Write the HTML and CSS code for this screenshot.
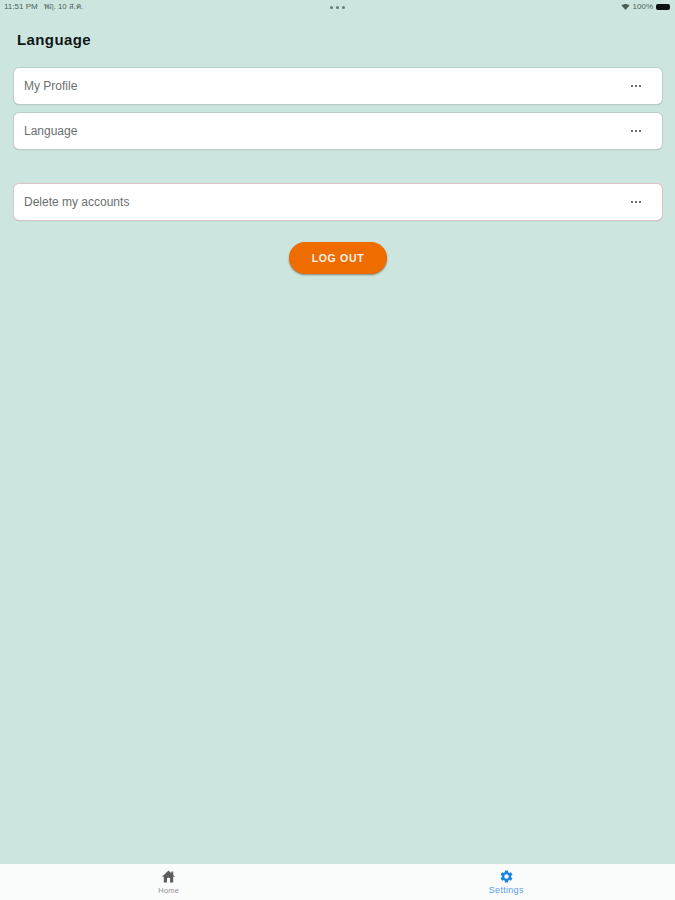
FILE: index.html
```html
<!DOCTYPE html>
<html lang="en">

<head>
    <meta charset="UTF-8">
    <meta name="viewport" content="width=device-width, initial-scale=1.0">
    <title>Settings</title>
    <link rel="stylesheet" href="styles.css">
</head>

<body>
    <header class="status-bar">
        <div class="status-left">
            <span class="time">11:51 PM</span>
            <span class="date">พฤ. 10 ส.ค.</span>
        </div>
        <div class="multitask"><i></i><i></i><i></i></div>
        <div class="status-right">
            <svg class="wifi" viewBox="0 0 24 18">
                <path d="M12 18 0 4.500C7-1.500 17-1.500 24 4.500z" />
            </svg>
            <span class="percent">100%</span>
            <span class="battery"></span>
        </div>
    </header>

    <main class="content">
        <h1>Language</h1>

        <button class="row">
            <span class="label">My Profile</span>
            <span class="dots"><i></i><i></i><i></i></span>
        </button>
        <button class="row">
            <span class="label">Language</span>
            <span class="dots"><i></i><i></i><i></i></span>
        </button>
        <button class="row row-delete">
            <span class="label">Delete my accounts</span>
            <span class="dots"><i></i><i></i><i></i></span>
        </button>

        <button class="logout"><span>LOG OUT</span></button>
    </main>

    <nav class="tab-bar">
        <a class="tab">
            <svg viewBox="0 0 24 24">
                <path d="M12 2.500 1.500 12.500H4.500V21.500H9.500V16a2.500 2.500 0 0 1 5 0V21.500H19.500V12.500H22.500L19.500 9.700V4H16.500V6.800z" />
            </svg>
            <span>Home</span>
        </a>
        <a class="tab active">
            <svg viewBox="0 0 24 24">
                <path d="M19.140 12.940c.04-.3.06-.61.06-.94 0-.32-.02-.64-.07-.94l2.030-1.580a.49.49 0 0 0 .12-.61l-1.920-3.320a.488.488 0 0 0-.59-.22l-2.390.96c-.5-.38-1.030-.7-1.620-.94l-.36-2.540a.484.484 0 0 0-.48-.41h-3.840c-.24 0-.43.17-.47.41l-.36 2.540c-.59.24-1.130.57-1.620.94l-2.390-.96c-.22-.08-.47 0-.59.22L2.740 8.870c-.12.21-.08.47.12.61l2.030 1.580c-.05.3-.09.63-.09.94s.02.64.07.94l-2.030 1.580a.49.49 0 0 0-.12.61l1.920 3.320c.12.22.37.29.59.22l2.390-.96c.5.38 1.030.7 1.620.94l.36 2.540c.05.24.24.41.48.41h3.840c.24 0 .44-.17.47-.41l.36-2.540c.59-.24 1.130-.56 1.620-.94l2.390.96c.22.08.47 0 .59-.22l1.920-3.320c.12-.22.07-.47-.12-.61zM12 15.600A3.600 3.600 0 1 1 12 8.400a3.600 3.600 0 0 1 0 7.200z" />
            </svg>
            <span>Settings</span>
        </a>
    </nav>
</body>

</html>
```

FILE: styles.css
```css
* {
    box-sizing: border-box;
    margin: 0;
    padding: 0;
}

body {
    font-family: "Liberation Sans", Arial, sans-serif;
    background: #cce6df;
    height: 100vh;
    display: flex;
    flex-direction: column;
    overflow: hidden;
}

button {
    font-family: inherit;
    border: none;
}

/* status bar */
.status-bar {
    height: 14px;
    padding: 0 4px;
    display: grid;
    grid-template-columns: 1fr auto 1fr;
    align-items: center;
    font-size: 8px;
    line-height: 14px;
    color: #4c5e59;
}

.status-left {
    display: flex;
    gap: 6px;
    white-space: nowrap;
}

.date {
    font-size: 7.800px;
}

.multitask {
    display: flex;
    gap: 3px;
}

.multitask i {
    width: 3px;
    height: 3px;
    border-radius: 50%;
    background: #647b75;
}

.status-right {
    display: flex;
    align-items: center;
    justify-content: flex-end;
    gap: 3px;
}

.wifi {
    width: 9px;
    height: 6px;
    fill: #4c5e59;
}

.battery {
    width: 14px;
    height: 6px;
    border-radius: 2px;
    background: #0b1110;
    margin-right: 1px;
}

/* settings list */
.content {
    flex: 1;
    padding: 17px 13px 0 14px;
    display: flex;
    flex-direction: column;
}

h1 {
    font-size: 15px;
    line-height: 18px;
    letter-spacing: 0.400px;
    color: #101615;
    margin: 0 0 19px 3px;
}

.row {
    height: 36px;
    margin-bottom: 9px;
    padding: 0 21px 0 10px;
    display: flex;
    align-items: center;
    justify-content: space-between;
    background: #fff;
    border-radius: 5px;
    box-shadow: 0 0 0 1px #bccdc9, 0 1px 1px #7f8f8b;
    font-size: 12px;
    color: #68706f;
}

.row-delete {
    margin-top: 26px;
    box-shadow: 0 0 0 1px #dcc3c6, 0 1px 1px #7f8f8b;
}

.dots {
    display: flex;
    gap: 2px;
}

.dots i {
    width: 2px;
    height: 2px;
    background: #6a6f72;
}

.logout {
    align-self: center;
    width: 98px;
    height: 32px;
    margin-top: 13px;
    border-radius: 16px;
    background: #ef6c00;
    box-shadow: 0 1px 2px rgba(80, 60, 40, 0.6);
    color: #fff2e6;
    font-size: 10.500px;
    font-weight: bold;
    letter-spacing: 0.700px;
}

/* bottom tabs */
.tab-bar {
    height: 36px;
    display: flex;
    background: #fafbfb;
}

.tab {
    flex: 1;
    display: flex;
    flex-direction: column;
    align-items: center;
    padding-top: 5px;
    font-size: 7.500px;
    line-height: 14px;
    letter-spacing: 0.200px;
    color: #929292;
}

.tab svg {
    width: 15px;
    height: 15px;
    fill: #5c5c5c;
}

.tab.active {
    color: #5b9fe8;
    font-size: 9px;
    line-height: 12px;
    letter-spacing: 0.300px;
}

.tab.active svg {
    fill: #1b84e0;
}
```
